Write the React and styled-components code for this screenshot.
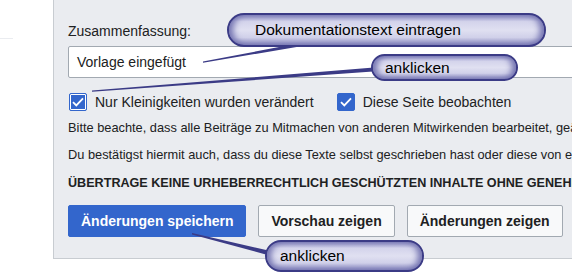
import React from 'react';
import styled, { createGlobalStyle } from 'styled-components';

const GlobalStyle = createGlobalStyle`
  html, body { margin: 0; padding: 0; background: #fff; }
  body { font-family: "Liberation Sans", Arial, sans-serif; color: #202122; }
`;

const Page = styled.div`
  position: relative;
  width: 572px;
  height: 276px;
  overflow: hidden;
  display: flex;
  align-items: flex-start;
`;

const Side = styled.div`
  width: 53px;
  flex: none;
  padding-top: 38px;
`;

const SideRule = styled.div`
  width: 13px;
  height: 1px;
  background: #eaecf0;
`;

const Panel = styled.div`
  flex: none;
  width: 720px;
  background: #eaecf0;
  border-left: 1px solid #c8ccd1;
  border-bottom: 1px solid #c8ccd1;
  padding: 22px 0 21px 14px;
  box-sizing: border-box;
  display: flex;
  flex-direction: column;
`;

const Label = styled.div`
  font-size: 14px;
  line-height: 18px;
`;

const Input = styled.div`
  margin-top: 6px;
  height: 32px;
  box-sizing: border-box;
  background: #fff;
  border: 1px solid #a2a9b1;
  border-radius: 2px;
  padding-left: 8px;
  display: flex;
  align-items: center;
  font-size: 14px;
`;

const CheckRow = styled.div`
  margin-top: 15px;
  display: flex;
  align-items: center;
  gap: 22px;
  height: 18px;
`;

const CheckItem = styled.label`
  display: flex;
  align-items: center;
  gap: 8px;
  font-size: 14px;
  padding-left: 1px;
`;

const Box = styled.span`
  width: 18px;
  height: 18px;
  box-sizing: border-box;
  border-radius: 2px;
  background: #36c;
  border: 1px solid #36c;
  box-shadow: ${p => (p.$focus ? 'inset 0 0 0 1px #fff' : 'none')};
  display: flex;
  align-items: center;
  justify-content: center;
`;

const Note = styled.div`
  font-size: ${p => (p.$strong ? 12.6 : 12.8)}px;
  line-height: 18px;
  white-space: nowrap;
  margin-top: ${p => p.$gap}px;
  font-weight: ${p => (p.$strong ? 'bold' : 'normal')};
`;

const Buttons = styled.div`
  margin-top: 13px;
  display: flex;
  gap: 12px;
`;

const Button = styled.div`
  height: 32px;
  box-sizing: border-box;
  padding: 0 ${p => p.$pad}px;
  display: flex;
  align-items: center;
  border-radius: 2px;
  font-size: 14px;
  font-weight: bold;
  background: ${p => (p.$primary ? '#36c' : '#f8f9fa')};
  color: ${p => (p.$primary ? '#fff' : '#202122')};
  border: 1px solid ${p => (p.$primary ? '#36c' : '#a2a9b1')};
`;

const Tails = styled.svg`
  position: absolute;
  left: 0;
  top: 0;
  pointer-events: none;
`;

const Bubble = styled.div`
  position: absolute;
  left: ${p => p.$x}px;
  top: ${p => p.$y}px;
  width: ${p => p.$w}px;
  height: ${p => p.$h}px;
  box-sizing: border-box;
  padding-left: ${p => p.$pad}px;
  border: 2px solid #3b3b86;
  border-radius: ${p => p.$h / 2}px;
  background: linear-gradient(180deg, #8484bd 0%, #d3d3eb 22%, #e0e0f1 50%, #d0d0e9 75%, #8080b9 100%);
  box-shadow: inset 7px 0 6px -3px #7272b0, inset -7px 0 6px -3px #7272b0;
  display: flex;
  align-items: center;
  font-size: 15.5px;
  color: #000;
  white-space: nowrap;
`;

const Check = () => (
  <svg width="12" height="10" viewBox="0 0 12 10">
    <path d="M1 5.2 L4.3 8.4 L11 1.4" fill="none" stroke="#fff" strokeWidth="1.8" />
  </svg>
);

export default function App() {
  return (
    <>
      <GlobalStyle />
      <Page>
        <Side>
          <SideRule />
        </Side>
        <Panel>
          <Label>Zusammenfassung:</Label>
          <Input>Vorlage eingefügt</Input>
          <CheckRow>
            <CheckItem>
              <Box $focus><Check /></Box>
              Nur Kleinigkeiten wurden verändert
            </CheckItem>
            <CheckItem>
              <Box><Check /></Box>
              Diese Seite beobachten
            </CheckItem>
          </CheckRow>
          <Note $gap={8}>
            Bitte beachte, dass alle Beiträge zu Mitmachen von anderen Mitwirkenden bearbeitet, geändert oder gelöscht werden können.
          </Note>
          <Note $gap={9}>
            Du bestätigst hiermit auch, dass du diese Texte selbst geschrieben hast oder diese von einer gemeinfreien Quelle kopiert hast.
          </Note>
          <Note $gap={10} $strong>
            ÜBERTRAGE KEINE URHEBERRECHTLICH GESCHÜTZTEN INHALTE OHNE GENEHMIGUNG!
          </Note>
          <Buttons>
            <Button $primary $pad={12}>Änderungen speichern</Button>
            <Button $pad={12}>Vorschau zeigen</Button>
            <Button $pad={12}>Änderungen zeigen</Button>
          </Buttons>
        </Panel>

        <Tails width="572" height="276" viewBox="0 0 572 276">
          <polygon points="203,61.5 300,43 320,43 203,62.8" fill="#3b3b86" />
          <polygon points="92,90.6 380,67 380,71 92,91.8" fill="#3b3b86" />
          <polygon points="192,233 275,252 275,257 192,234.4" fill="#3b3b86" />
        </Tails>
        <Bubble $x={227} $y={13} $w={319} $h={34} $pad={26}>Dokumentationstext eintragen</Bubble>
        <Bubble $x={371} $y={54} $w={147} $h={27} $pad={12}>anklicken</Bubble>
        <Bubble $x={265} $y={240} $w={159} $h={32} $pad={13}>anklicken</Bubble>
      </Page>
    </>
  );
}
